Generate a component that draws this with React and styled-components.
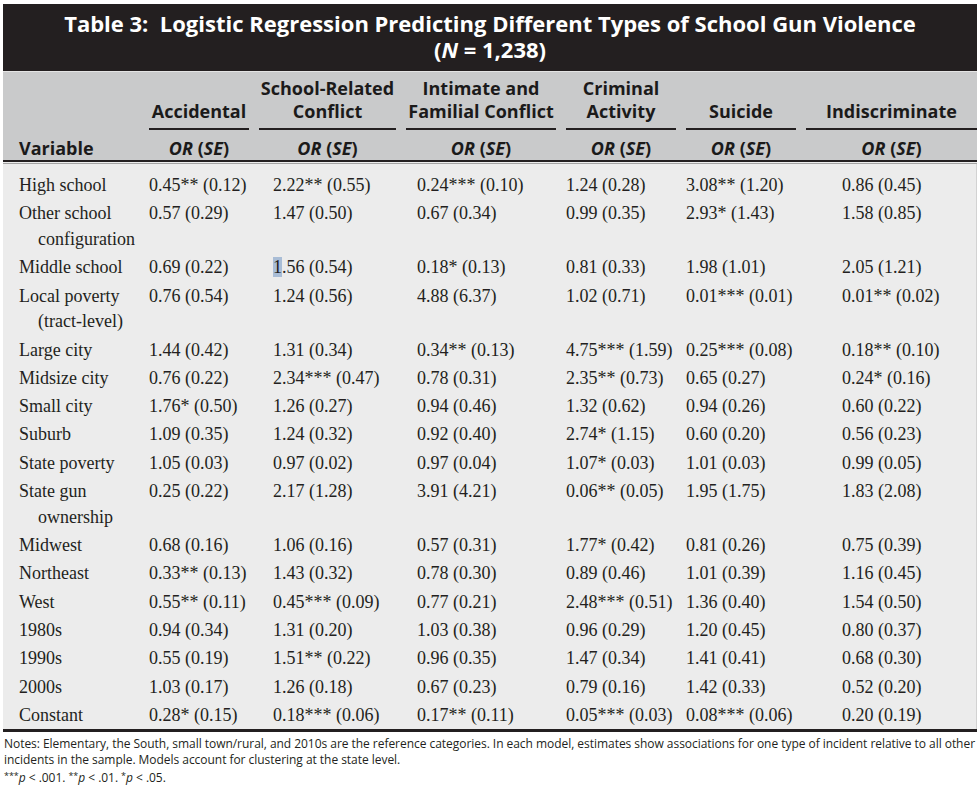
import React from "react";
import styled, { createGlobalStyle } from "styled-components";

const GlobalStyle = createGlobalStyle`
  html, body { margin: 0; padding: 0; background: #ffffff; }
  body { width: 980px; }
`;

const cols = "136px 100px 137px 150px 110px 110px 171px";
const valuePad = [15, 0, 14, 11, 0, 0, 36];

const Page = styled.div`
  width: 974px;
  padding: 4px 3px 0 3px;
`;

const TitleBar = styled.header`
  background: #231f20;
  color: #ffffff;
  font-family: "Open Sans", sans-serif;
  font-weight: 700;
  font-size: 22px;
  line-height: 26px;
  text-align: center;
  padding: 6px 0 9px;
  border-bottom: 1px solid #e4e4e4;
  white-space: pre;
`;

const TitleLine = styled.div`
  height: 26px;
`;

const HeadBand = styled.div`
  display: grid;
  grid-template-columns: ${cols};
  column-gap: 10px;
  row-gap: 7px;
  background: #c9cacb;
  padding-top: 5px;
  border-bottom: 2px solid #231f20;
  color: #1b1a1a;
  font-family: "Open Sans", sans-serif;
  font-weight: 700;
  font-size: 18px;
  line-height: 23px;
`;

const GroupHead = styled.div`
  align-self: end;
  text-align: center;
  padding-bottom: 5px;
  border-bottom: ${(p) => (p.$blank ? "none" : "2px solid #231f20")};
  white-space: nowrap;
`;

const SubHead = styled.div`
  text-align: ${(p) => (p.$left ? "left" : "center")};
  padding-left: ${(p) => (p.$left ? "16px" : "0")};
  white-space: nowrap;
`;

const Body = styled.div`
  background: #ececec;
  box-shadow: inset 0 1px 0 #ececec, inset 0 2px 0 #a3a3a3, inset -1px 0 0 #d2d2d2;
  padding: 9px 0 0;
  border-bottom: 3px solid #231f20;
  color: #231f20;
  font-family: "Liberation Serif", "Times New Roman", serif;
  font-size: 18px;
  line-height: 25.7px;
`;

const Row = styled.div`
  display: grid;
  grid-template-columns: ${cols};
  column-gap: 10px;
  padding: 2px 0 0.6px;
`;

const Label = styled.div`
  padding-left: 16px;
  white-space: nowrap;
`;

const Cont = styled.div`
  padding-left: 19px;
`;

const Value = styled.div`
  padding-left: ${(p) => p.$pad}px;
  white-space: nowrap;
`;

const Sel = styled.span`
  background: #a9bdd6;
`;

const Notes = styled.div`
  padding: 4px 0 0 1px;
  font-family: "Open Sans", sans-serif;
  font-size: 12px;
  letter-spacing: -0.04px;
  line-height: 16px;
  color: #231f20;
  white-space: nowrap;
`;

const Sup = styled.span`
  font-size: 9px;
  vertical-align: 3px;
`;

const heads = [
  ["Accidental"],
  ["School-Related", "Conflict"],
  ["Intimate and", "Familial Conflict"],
  ["Criminal", "Activity"],
  ["Suicide"],
  ["Indiscriminate"],
];

const rows = [
  [["High school"], "0.45** (0.12)", "2.22** (0.55)", "0.24*** (0.10)", "1.24 (0.28)", "3.08** (1.20)", "0.86 (0.45)"],
  [["Other school", "configuration"], "0.57 (0.29)", "1.47 (0.50)", "0.67 (0.34)", "0.99 (0.35)", "2.93* (1.43)", "1.58 (0.85)"],
  [["Middle school"], "0.69 (0.22)", "SEL", "0.18* (0.13)", "0.81 (0.33)", "1.98 (1.01)", "2.05 (1.21)"],
  [["Local poverty", "(tract-level)"], "0.76 (0.54)", "1.24 (0.56)", "4.88 (6.37)", "1.02 (0.71)", "0.01*** (0.01)", "0.01** (0.02)"],
  [["Large city"], "1.44 (0.42)", "1.31 (0.34)", "0.34** (0.13)", "4.75*** (1.59)", "0.25*** (0.08)", "0.18** (0.10)"],
  [["Midsize city"], "0.76 (0.22)", "2.34*** (0.47)", "0.78 (0.31)", "2.35** (0.73)", "0.65 (0.27)", "0.24* (0.16)"],
  [["Small city"], "1.76* (0.50)", "1.26 (0.27)", "0.94 (0.46)", "1.32 (0.62)", "0.94 (0.26)", "0.60 (0.22)"],
  [["Suburb"], "1.09 (0.35)", "1.24 (0.32)", "0.92 (0.40)", "2.74* (1.15)", "0.60 (0.20)", "0.56 (0.23)"],
  [["State poverty"], "1.05 (0.03)", "0.97 (0.02)", "0.97 (0.04)", "1.07* (0.03)", "1.01 (0.03)", "0.99 (0.05)"],
  [["State gun", "ownership"], "0.25 (0.22)", "2.17 (1.28)", "3.91 (4.21)", "0.06** (0.05)", "1.95 (1.75)", "1.83 (2.08)"],
  [["Midwest"], "0.68 (0.16)", "1.06 (0.16)", "0.57 (0.31)", "1.77* (0.42)", "0.81 (0.26)", "0.75 (0.39)"],
  [["Northeast"], "0.33** (0.13)", "1.43 (0.32)", "0.78 (0.30)", "0.89 (0.46)", "1.01 (0.39)", "1.16 (0.45)"],
  [["West"], "0.55** (0.11)", "0.45*** (0.09)", "0.77 (0.21)", "2.48*** (0.51)", "1.36 (0.40)", "1.54 (0.50)"],
  [["1980s"], "0.94 (0.34)", "1.31 (0.20)", "1.03 (0.38)", "0.96 (0.29)", "1.20 (0.45)", "0.80 (0.37)"],
  [["1990s"], "0.55 (0.19)", "1.51** (0.22)", "0.96 (0.35)", "1.47 (0.34)", "1.41 (0.41)", "0.68 (0.30)"],
  [["2000s"], "1.03 (0.17)", "1.26 (0.18)", "0.67 (0.23)", "0.79 (0.16)", "1.42 (0.33)", "0.52 (0.20)"],
  [["Constant"], "0.28* (0.15)", "0.18*** (0.06)", "0.17** (0.11)", "0.05*** (0.03)", "0.08*** (0.06)", "0.20 (0.19)"],
];

function OrSe() {
  return (
    <>
      <i>OR</i> (<i>SE</i>)
    </>
  );
}

export default function App() {
  return (
    <>
      <GlobalStyle />
      <Page>
        <TitleBar>
          <TitleLine>{"Table 3:  Logistic Regression Predicting Different Types of School Gun Violence"}</TitleLine>
          <TitleLine>
            (<i>N</i> = 1,238)
          </TitleLine>
        </TitleBar>
        <HeadBand>
          <GroupHead $blank />
          {heads.map((h, i) => (
            <GroupHead key={i}>
              {h.map((line, j) => (
                <div key={j}>{line}</div>
              ))}
            </GroupHead>
          ))}
          <SubHead $left>Variable</SubHead>
          {heads.map((_, i) => (
            <SubHead key={i}>
              <OrSe />
            </SubHead>
          ))}
        </HeadBand>
        <Body>
          {rows.map((r, i) => (
            <Row key={i}>
              <Label>
                {r[0][0]}
                {r[0][1] && <Cont>{r[0][1]}</Cont>}
              </Label>
              {r.slice(1).map((v, j) => (
                <Value key={j} $pad={valuePad[j + 1]}>
                  {v === "SEL" ? (
                    <>
                      <Sel>1</Sel>.56 (0.54)
                    </>
                  ) : (
                    v
                  )}
                </Value>
              ))}
            </Row>
          ))}
        </Body>
        <Notes>
          Notes: Elementary, the South, small town/rural, and 2010s are the reference categories. In each model, estimates show associations for one type of incident relative to all other
          <br />
          incidents in the sample. Models account for clustering at the state level.
          <br />
          <Sup>***</Sup>
          <i>p</i> &lt; .001. <Sup>**</Sup>
          <i>p</i> &lt; .01. <Sup>*</Sup>
          <i>p</i> &lt; .05.
        </Notes>
      </Page>
    </>
  );
}
